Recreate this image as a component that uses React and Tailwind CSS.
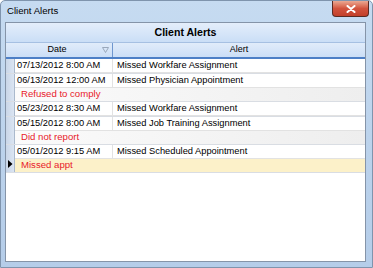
import React from "react";

const records = [
  { date: "07/13/2012 8:00 AM", alert: "Missed Workfare Assignment" },
  { date: "06/13/2012 12:00 AM", alert: "Missed Physician Appointment", note: "Refused to comply" },
  { date: "05/23/2012 8:30 AM", alert: "Missed Workfare Assignment" },
  { date: "05/15/2012 8:00 AM", alert: "Missed Job Training Assignment", note: "Did not report" },
  { date: "05/01/2012 9:15 AM", alert: "Missed Scheduled Appointment", note: "Missed appt", selected: true },
];

function Record({ r }) {
  return (
    <div className="flex border-b border-[#d9dde3]">
      <div className="w-[9px] shrink-0 bg-gradient-to-r from-[#c9d6e8] to-[#dbe5f2] border-r border-[#aab9cc] flex items-end justify-center pb-[4px]">
        {r.selected && (
          <svg width="5" height="8" viewBox="0 0 5 8">
            <path d="M0 0 L4.5 4 L0 8 Z" fill="#000" />
          </svg>
        )}
      </div>
      <div className="flex-1 flex flex-col">
        <div className="flex h-[14px] items-center border-b border-[#e2e2e2]">
          <div className="w-[98px] shrink-0 pl-[2px] border-r border-[#e2e2e2] h-full flex items-center">{r.date}</div>
          <div className="pl-[4px]">{r.alert}</div>
        </div>
        {r.note && (
          <div
            className={
              "h-[13px] flex items-center pl-[6px] text-[9.6px] text-[#e8202a] " +
              (r.selected ? "bg-[#fcf1c9]" : "bg-gradient-to-r from-[#fbfbfb] to-[#eeeeee]")
            }
          >
            {r.note}
          </div>
        )}
      </div>
    </div>
  );
}

export default function App() {
  return (
    <div
      className="w-[373px] h-[268px] flex flex-col bg-gradient-to-b from-[#c6dbf1] via-[#bcd3ec] to-[#b5cde9] border border-[#7f94ad] rounded-t-[5px] overflow-hidden"
      style={{ fontFamily: '"Liberation Sans", Arial, sans-serif' }}
    >
      <div className="h-[21px] shrink-0 flex items-start justify-between">
        <div className="pl-[6px] pt-[3px] text-[9.6px] text-black">Client Alerts</div>
        <div className="mr-[3px] w-[37px] h-[16px] rounded-b-[4px] border border-t-0 border-[#5a2a22] bg-gradient-to-b from-[#eaa892] via-[#d2533d] to-[#c23f2a] flex items-center justify-center">
          <svg width="10" height="8" viewBox="0 0 10 8">
            <path d="M1.5 1 L8.5 7 M8.5 1 L1.5 7" stroke="#fff" strokeWidth="2" strokeLinecap="round" />
          </svg>
        </div>
      </div>
      <div className="flex-1 mx-[4px] mb-[5px] mr-[6px] border border-[#8594a8] bg-white flex flex-col text-[9.3px] text-black">
        <div className="h-[20px] shrink-0 flex items-center justify-center font-bold text-[10.6px] bg-gradient-to-b from-[#e4eefb] to-[#cadef6] border-b border-[#a6c0e2]">
          Client Alerts
        </div>
        <div className="h-[16px] shrink-0 flex bg-gradient-to-b from-[#e1ecfa] to-[#cbdef6] border-b-2 border-[#4d7fc6] text-[9px]">
          <div className="w-[107px] shrink-0 relative flex items-center justify-center border-r border-[#6f97cf] pr-[4px]">
            Date
            <svg className="absolute right-[3px] top-[4px]" width="7" height="6" viewBox="0 0 7 6">
              <path d="M0.5 0.5 H6.5 L3.5 5.5 Z" fill="none" stroke="#9aa8bb" strokeWidth="1" />
            </svg>
          </div>
          <div className="flex-1 flex items-center justify-center">Alert</div>
        </div>
        <div className="flex flex-col">
          {records.map((r, i) => (
            <Record key={i} r={r} />
          ))}
        </div>
      </div>
    </div>
  );
}
